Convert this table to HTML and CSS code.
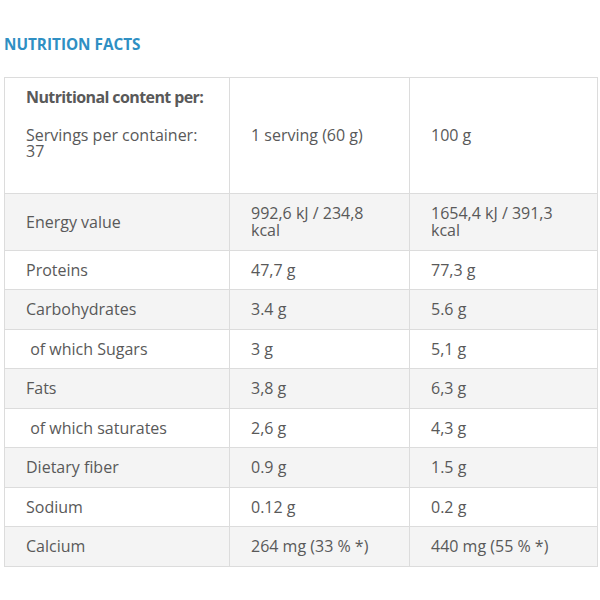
FILE: index.html
```html
<!DOCTYPE html>
<html>
<head>
<meta charset="utf-8">
<link rel="stylesheet" href="styles.css">
</head>
<body>
<div class="page">
  <h2 class="title">NUTRITION FACTS</h2>
  <table class="facts">
    <colgroup>
      <col class="c1"><col class="c2"><col class="c3">
    </colgroup>
    <tr class="head">
      <td class="first">
        <div class="strong">Nutritional content per:</div>
        <div class="serv">Servings per container:<br>37</div>
      </td>
      <td>1 serving (60 g)</td>
      <td>100 g</td>
    </tr>
    <tr class="alt"><td>Energy value</td><td>992,6 kJ / 234,8<br>kcal</td><td>1654,4 kJ / 391,3<br>kcal</td></tr>
    <tr><td>Proteins</td><td>47,7 g</td><td>77,3 g</td></tr>
    <tr class="alt"><td>Carbohydrates</td><td>3.4 g</td><td>5.6 g</td></tr>
    <tr><td>&nbsp;of which Sugars</td><td>3 g</td><td>5,1 g</td></tr>
    <tr class="alt"><td>Fats</td><td>3,8 g</td><td>6,3 g</td></tr>
    <tr><td>&nbsp;of which saturates</td><td>2,6 g</td><td>4,3 g</td></tr>
    <tr class="alt"><td>Dietary fiber</td><td>0.9 g</td><td>1.5 g</td></tr>
    <tr><td>Sodium</td><td>0.12 g</td><td>0.2 g</td></tr>
    <tr class="alt"><td>Calcium</td><td>264 mg (33 % *)</td><td>440 mg (55 % *)</td></tr>
  </table>
</div>
</body>
</html>
```
FILE: styles.css
```css
html, body {
  margin: 0;
  padding: 0;
  background: #fff;
}
.page {
  padding: 0 3px 0 4px;
  font-family: "Open Sans", "Liberation Sans", sans-serif;
  color: #595959;
}
.title {
  margin: 0;
  padding-top: 35px;
  height: 77px;
  box-sizing: border-box;
  font-size: 15.3px;
  line-height: 18px;
  font-weight: 700;
  color: #2f8fc3;
}
.facts {
  width: 593px;
  border-collapse: collapse;
  table-layout: fixed;
  font-size: 16px;
  line-height: 17px;
}
.c1 { width: 225px; }
.c2 { width: 180px; }
.c3 { width: 188px; }
.facts td {
  border: 1px solid #dcdcdc;
  padding: 11px 21px 10.5px;
  vertical-align: middle;
}
.facts tr.alt td {
  background: #f4f4f4;
}
.facts tr.head td {
  height: 93.5px;
}
.facts tr.head td.first {
  vertical-align: top;
}
.strong {
  font-weight: 700;
  white-space: nowrap;
  letter-spacing: -0.6px;
}
.serv {
  margin-top: 21px;
  line-height: 16px;
}
```
